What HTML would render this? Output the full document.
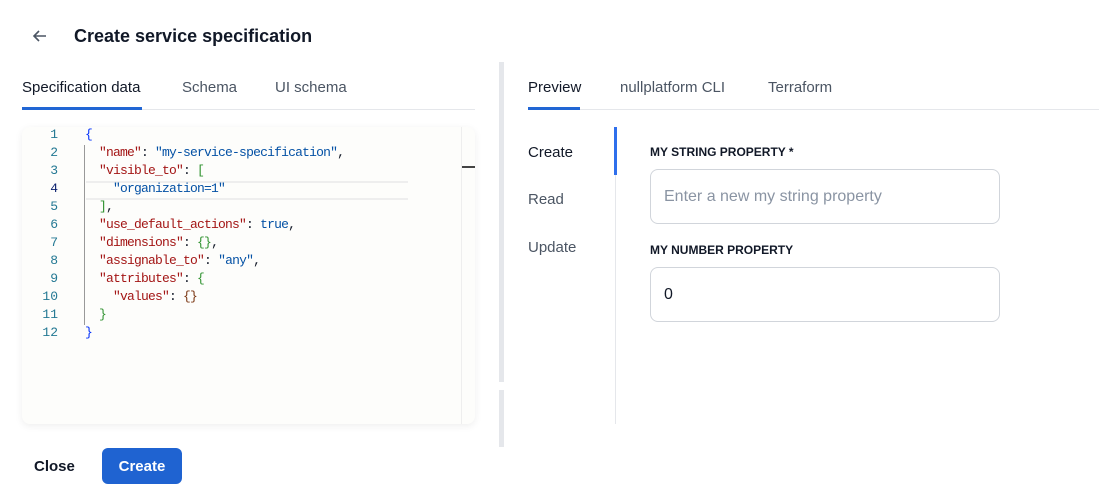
<!DOCTYPE html>
<html><head><style>
body{margin:0;width:1099px;height:495px;background:#fff;font-family:"Liberation Sans",sans-serif;position:relative;overflow:hidden;color:#111827}
.a{position:absolute}
.tab{position:absolute;top:79px;font-size:15px;color:#4b5563}
.code{font-family:"Liberation Mono",monospace;font-size:13px;letter-spacing:-0.8px;line-height:18px;white-space:pre}
.k{color:#a31515}.s{color:#0451a5}.g{color:#319331}.b{color:#0431fa}.br{color:#7b3814}
.nav{position:absolute;left:528px;font-size:15px;color:#4b5563}
.lbl{position:absolute;left:650px;font-size:12px;font-weight:bold;color:#111827}
.inp{position:absolute;left:650px;width:350px;height:55px;border:1px solid #d1d5db;border-radius:8px;box-sizing:border-box;font-size:16px;padding:0 13px;line-height:53px}
</style></head><body>
<svg class="a" style="left:31px;top:27px" width="18" height="18" viewBox="0 0 18 18"><path d="M15 9H3M8 4L3 9l5 5" stroke="#4b5563" stroke-width="1.6" fill="none"/></svg>
<div class="a" style="left:74px;top:26px;font-size:18px;font-weight:bold">Create service specification</div>

<div class="tab" style="left:22px;color:#111827">Specification data</div>
<div class="tab" style="left:182px">Schema</div>
<div class="tab" style="left:275px">UI schema</div>
<div class="a" style="left:22px;top:109px;width:453px;height:1px;background:#e5e7eb"></div>
<div class="a" style="left:22px;top:107px;width:120px;height:3px;background:#2166d4"></div>

<div class="a" style="left:499px;top:62px;width:5px;height:320px;background:#e5e7eb"></div>
<div class="a" style="left:499px;top:390px;width:5px;height:57px;background:#e5e7eb"></div>

<div class="a" style="left:22px;top:127px;width:453px;height:297px;background:#fdfdfb;border-radius:8px;box-shadow:0 2px 8px rgba(0,0,0,.07)"></div>
<div class="a" style="left:461px;top:127px;width:1px;height:297px;background:#eee"></div>
<div class="a" style="left:462px;top:166px;width:13px;height:2px;background:#444"></div>
<div class="a" style="left:86px;top:181px;width:322px;height:19px;border-top:2px solid #eee;border-bottom:2px solid #eee;box-sizing:border-box"></div>
<div class="a" style="left:84px;top:145px;width:1px;height:180px;background:#999"></div>
<div class="a code" style="left:30px;top:126px;width:28px;text-align:right;color:#237893;letter-spacing:0">1
2
3
<span style="color:#0b216f">4</span>
5
6
7
8
9
10
11
12</div>
<div class="a code" style="left:85px;top:126px"><span class="b">{</span>
  <span class="k">"name"</span>: <span class="s">"my-service-specification"</span>,
  <span class="k">"visible_to"</span>: <span class="g">[</span>
    <span class="s">"organization=1"</span>
  <span class="g">]</span>,
  <span class="k">"use_default_actions"</span>: <span class="s">true</span>,
  <span class="k">"dimensions"</span>: <span class="g">{}</span>,
  <span class="k">"assignable_to"</span>: <span class="s">"any"</span>,
  <span class="k">"attributes"</span>: <span class="g">{</span>
    <span class="k">"values"</span>: <span class="br">{}</span>
  <span class="g">}</span>
<span class="b">}</span></div>

<div class="tab" style="left:528px;color:#111827">Preview</div>
<div class="tab" style="left:620px">nullplatform CLI</div>
<div class="tab" style="left:768px">Terraform</div>
<div class="a" style="left:528px;top:109px;width:571px;height:1px;background:#e5e7eb"></div>
<div class="a" style="left:528px;top:107px;width:52px;height:3px;background:#2166d4"></div>

<div class="nav" style="top:144px;color:#111827">Create</div>
<div class="nav" style="top:191px">Read</div>
<div class="nav" style="top:239px">Update</div>
<div class="a" style="left:615px;top:127px;width:1px;height:297px;background:#e5e7eb"></div>
<div class="a" style="left:614px;top:127px;width:3px;height:48px;background:#2f6fec"></div>

<div class="lbl" style="top:145px">MY STRING PROPERTY *</div>
<div class="inp" style="top:169px;color:#8a94a3">Enter a new my string property</div>
<div class="lbl" style="top:243px">MY NUMBER PROPERTY</div>
<div class="inp" style="top:267px;color:#111827">0</div>

<div class="a" style="left:34px;top:458px;font-size:15px;font-weight:bold">Close</div>
<div class="a" style="left:102px;top:448px;width:80px;height:36px;background:#1f63d1;border-radius:6px;color:#fff;font-weight:bold;font-size:15px;text-align:center;line-height:37px">Create</div>
</body></html>
